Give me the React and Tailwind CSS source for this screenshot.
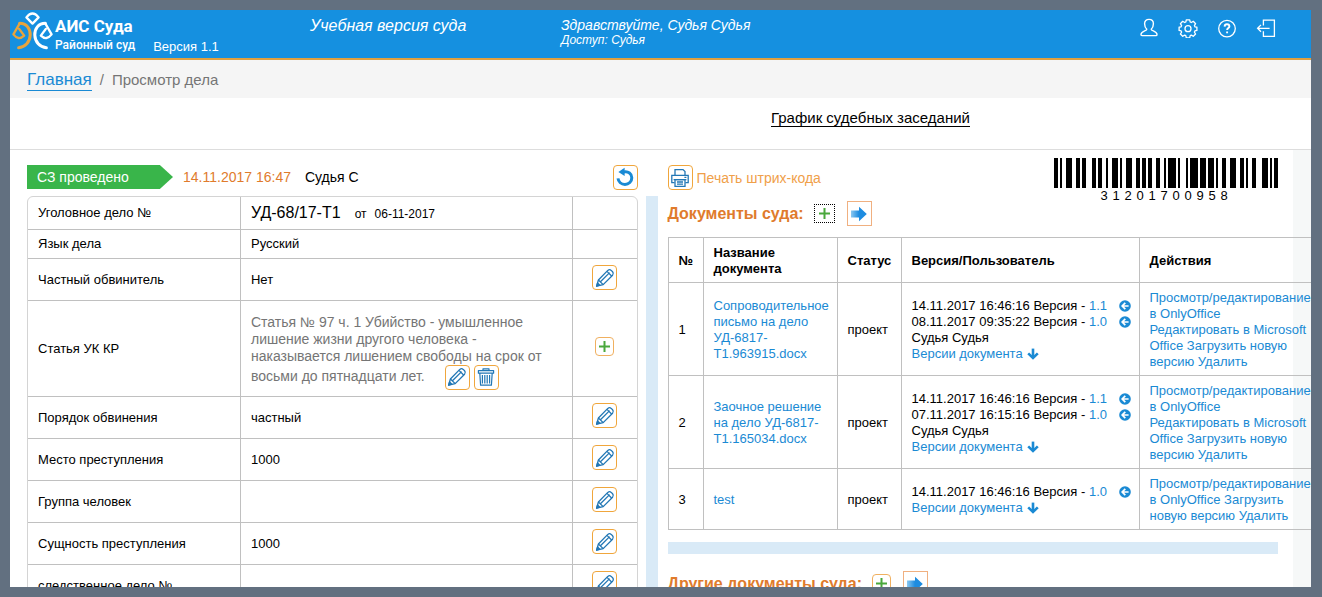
const caseRows = [
  { label: 'Частный обвинитель', value: 'Нет' },
  { label: 'Статья УК КР', article: true },
  { label: 'Порядок обвинения', value: 'частный' },
  { label: 'Место преступления', value: '1000' },
  { label: 'Группа человек', value: '' },
  { label: 'Сущность преступления', value: '1000' },
  { label: 'следственное дело №', value: '' },
];

const documents = [
  {
    id: 1,
    name: 'Сопроводительное письмо на дело УД-6817-Т1.963915.docx',
    status: 'проект',
    versions: [
      { date: '14.11.2017 16:46:16', number: '1.1' },
      { date: '08.11.2017 09:35:22', number: '1.0' },
    ],
    user: 'Судья Судья',
    actions: ['Редактировать в Microsoft Office', 'Загрузить новую версию', 'Удалить'],
  },
  {
    id: 2,
    name: 'Заочное решение на дело УД-6817-Т1.165034.docx',
    status: 'проект',
    versions: [
      { date: '14.11.2017 16:46:16', number: '1.1' },
      { date: '07.11.2017 16:15:16', number: '1.0' },
    ],
    user: 'Судья Судья',
    actions: ['Редактировать в Microsoft Office', 'Загрузить новую версию', 'Удалить'],
  },
  {
    id: 3,
    name: 'test',
    status: 'проект',
    versions: [{ date: '14.11.2017 16:46:16', number: '1.0' }],
    user: '',
    actions: ['Загрузить новую версию', 'Удалить'],
  },
];

// Code 128 symbols: bar and space widths in modules, bars first
const barcodeSymbols = [
  '211232', '212321', '221231', '123221', '212222',
  '114113', '114131', '311222', '322112', '2331112',
];

function Barcode({ number }) {
  let x = 0;
  const bars = [];
  [...barcodeSymbols.join('')].forEach((w, i) => {
    if (i % 2 === 0) bars.push({ x, w: Number(w) });
    x += Number(w);
  });

  return (
    <div className="w-56">
      <svg className="block h-[30px] w-full" viewBox="0 0 112 30" preserveAspectRatio="none" shapeRendering="crispEdges">
        {bars.map((bar) => (
          <rect key={bar.x} x={bar.x} y="0" width={bar.w} height="30" />
        ))}
      </svg>
      <div className="flex pt-px pl-11 text-[13px] leading-[14px]">
        {[...number].map((digit, i) => (
          <span key={i} className="w-3 text-center">{digit}</span>
        ))}
      </div>
    </div>
  );
}

function Logo() {
  return (
    <svg className="h-[38px] w-[41px]" viewBox="0 0 41 38" fill="none" strokeWidth="2.3" strokeLinejoin="round" strokeLinecap="round">
      <g stroke="#fff">
        <path d="M20.5 11.6 14.4 5.4Q20.5-2.4 26.6 5.4Z" />
        <path d="M33.4 11.6 39.6 22.4Q34.6 29 28.8 23.6L33.8 17" />
        <path d="M33.4 11.2C26.2 11.2 22.6 17 22.8 23C23 30 27.8 35.2 34.4 35.8" strokeWidth="3" />
      </g>
      <g stroke="#e8a43c">
        <path d="M7.6 11.6 1.4 22.4Q6.4 29 12.2 23.6L7.2 17" />
        <path d="M7.6 11.2C14.8 11.2 18.4 17 18.2 23C18 30 13.2 35.2 6.6 35.8" strokeWidth="3" />
      </g>
    </svg>
  );
}

function UserIcon() {
  return (
    <svg className="size-5" viewBox="0 0 20 20" fill="none" stroke="currentColor" strokeWidth="1.4">
      <path d="M7.8 11.2C6.2 9.8 5.6 8 5.6 5.8C5.6 3 7.3 1.4 10 1.4S14.4 3 14.4 5.8C14.4 8 13.8 9.8 12.2 11.2C12.2 13 18 12.8 18 16.4C18 17.3 17.6 17.6 17 17.6H3C2.4 17.6 2 17.3 2 16.4C2 12.8 7.8 13 7.8 11.2Z" />
    </svg>
  );
}

function GearIcon() {
  return (
    <svg className="size-5" viewBox="0 0 20 20" fill="none" stroke="currentColor" strokeWidth="1.3" strokeLinejoin="round">
      <path d="M8.3 1.8h3.4l.5 2.2 1.1.5 2-1.2 2.3 2.4-1.2 1.9.5 1.2 2 .4v3.2l-2 .5-.5 1.2 1.2 1.9-2.3 2.3-2-1.2-1.1.5-.5 2.2H8.3l-.5-2.2-1.1-.5-2 1.2-2.3-2.3 1.2-1.9-.5-1.2-2-.5V9.2l2-.4.5-1.2-1.2-1.9 2.3-2.4 2 1.2 1.1-.5z" />
      <circle cx="10" cy="10.7" r="3" />
    </svg>
  );
}

function HelpIcon() {
  return (
    <svg className="size-5" viewBox="0 0 20 20" fill="none" stroke="currentColor" strokeWidth="1.3">
      <circle cx="10" cy="10.6" r="8.3" />
      <path d="M7.6 8.6C7.7 7 8.6 6.3 10 6.3S12.4 7.1 12.4 8.4C12.4 10 10.1 10 10.1 12M10.1 13.4v1.9" strokeWidth="1.9" />
    </svg>
  );
}

function ExitIcon() {
  return (
    <svg className="size-5" viewBox="0 0 20 20" fill="none" stroke="currentColor" strokeWidth="1.3">
      <path d="M7.4 7.4V2.2H18.4V18.4H7.4V13.2M13.6 10.3H1.6M5 6.9 1.6 10.3 5 13.7" />
    </svg>
  );
}

function PencilIcon() {
  return (
    <svg className="size-5" viewBox="0 0 20 20" fill="none" stroke="#2277b5" strokeWidth="1.3" strokeLinejoin="round">
      <path d="M1.6 18.2 3.4 12 12.8 2.4Q14.6 1 16.2 2.4L17.6 3.8Q19 5.4 17.6 7.2L8.2 16.6Z" />
      <path d="M3.4 12 8.2 16.6M5.2 14 14.6 4.6M12 3.4 16.6 8" />
      <path d="M1.6 18.2 2.6 15 4.8 17.2Z" fill="#2277b5" />
    </svg>
  );
}

function TrashIcon() {
  return (
    <svg className="size-5" viewBox="0 0 20 20" fill="none" stroke="#2277b5" strokeWidth="1.2" strokeLinejoin="round">
      <path d="M7 3.6V1.8H13V3.6M2.4 3.6H17.6V6.2H2.4ZM3.8 6.2 4.6 18.2H15.4L16.2 6.2" />
      <path d="M6.4 8V16.6M8.8 8V16.6M11.2 8V16.6M13.6 8V16.6" />
    </svg>
  );
}

function PrinterIcon() {
  return (
    <svg className="size-5" viewBox="0 0 20 20" fill="none" stroke="#2277b5" strokeWidth="1.3">
      <path d="M5 7.4V1.6H13L15 3.6V7.4M4.6 14.6H1.8V7.4H18.2V14.6H15.4M3.6 11.6H16.4" />
      <path d="M5 11.6H15V18.4H5ZM7 14H13M7 16.2H13M14.4 9.4H16.4" />
    </svg>
  );
}

function RefreshIcon() {
  return (
    <svg className="size-5" viewBox="0 0 20 20" fill="none">
      <path d="M8.6 5C13.4 4 16.8 6.8 16.8 10.8C16.8 14.6 13.8 17.4 10 17.4C6.2 17.4 3.4 14.8 3 11.4" stroke="#1a8ad4" strokeWidth="3" />
      <path d="M3.4 5 9.6.8V9Z" fill="#1a8ad4" />
    </svg>
  );
}

function PlusIcon() {
  return (
    <svg className="size-[13px]" viewBox="0 0 13 13" stroke="#4aa83c" strokeWidth="2">
      <path d="M6.5 1V12M1 6.5H12" />
    </svg>
  );
}

function ArrowIcon() {
  return (
    <svg className="size-4" viewBox="0 0 16 16">
      <defs>
        <linearGradient id="arrowFill">
          <stop offset="0" stopColor="#8cc8f0" />
          <stop offset="0.5" stopColor="#1e8ce0" />
        </linearGradient>
      </defs>
      <path d="M0 4.6H8V.8L15.8 8 8 15.2V11.4H0Z" fill="url(#arrowFill)" />
    </svg>
  );
}

function RestoreIcon() {
  return (
    <svg className="size-3" viewBox="0 0 12 12" fill="none">
      <circle cx="6" cy="6" r="5.8" fill="#1a8ad4" />
      <path d="M9.6 6H3.4M6.3 2.9 3.2 6 6.3 9.1" stroke="#fff" strokeWidth="1.7" />
    </svg>
  );
}

function DownIcon() {
  return (
    <svg className="size-3" viewBox="0 0 12 12" fill="none" stroke="#1a8ad4">
      <path d="M6 .6V9.6" strokeWidth="2.6" />
      <path d="M1.2 5.4 6 10 10.8 5.4" strokeWidth="2.6" />
    </svg>
  );
}

function IconButton({ label, children }) {
  return (
    <button
      type="button"
      aria-label={label}
      className="inline-flex size-[25px] shrink-0 items-center justify-center rounded border border-[#f0a63c] bg-white"
    >
      {children}
    </button>
  );
}

function AddButton({ focused }) {
  return (
    <button
      type="button"
      aria-label="Добавить"
      className={
        focused
          ? 'flex h-[19px] w-[21px] items-center justify-center border border-dotted border-black bg-white'
          : 'inline-flex size-[19px] items-center justify-center rounded-sm border border-[#f0b060] bg-white'
      }
    >
      <PlusIcon />
    </button>
  );
}

function DocumentsTitle({ title, focused }) {
  return (
    <div className="flex items-center">
      <h2 className="text-base font-bold text-[#e07b2c]">{title}</h2>
      <div className="ml-2.5 flex items-center gap-3">
        <AddButton focused={focused} />
        <button
          type="button"
          aria-label="Перейти"
          className="flex size-[25px] items-center justify-center border border-[#f0b080] bg-white"
        >
          <ArrowIcon />
        </button>
      </div>
    </div>
  );
}

function Header() {
  return (
    <header className="flex h-[50px] shrink-0 border-b-2 border-[#e0a040] bg-[#1590e0] text-white">
      <div className="flex w-[300px] shrink-0 pt-0.5 pl-0.5">
        <Logo />
        <div className="ml-0.5 pt-1 font-['Roboto']">
          <div className="text-[17px] leading-5 font-bold">АИС Суда</div>
          <div className="text-xs leading-[18px] font-medium">Районный суд</div>
        </div>
        <span className="ml-[18px] self-end pb-[3px] text-[13px] leading-4">Версия 1.1</span>
      </div>
      <div className="w-[251px] shrink-0 pt-1.5 text-base leading-5 italic">Учебная версия суда</div>
      <div className="flex-1 pt-1.5 italic">
        <div className="text-sm leading-[18px]">Здравствуйте, Судья Судья</div>
        <div className="text-xs leading-3">Доступ: Судья</div>
      </div>
      <nav className="flex items-start gap-[19px] pt-2 pr-[35px]">
        <button type="button" aria-label="Профиль"><UserIcon /></button>
        <button type="button" aria-label="Настройки"><GearIcon /></button>
        <button type="button" aria-label="Помощь"><HelpIcon /></button>
        <button type="button" aria-label="Выход"><ExitIcon /></button>
      </nav>
    </header>
  );
}

function CasePanel() {
  return (
    <section>
      <div className="flex h-[46px] items-center pt-2">
        <div className="h-6 w-[146px] bg-[#39b54a] pl-2.5 text-sm leading-6 text-white [clip-path:polygon(0_0,91%_0,100%_50%,91%_100%,0_100%)]">
          СЗ проведено
        </div>
        <span className="ml-2.5 text-sm text-[#e07b2c]">14.11.2017 16:47</span>
        <span className="ml-3.5 text-sm">Судья С</span>
        <div className="ml-auto flex"><IconButton label="Обновить"><RefreshIcon /></IconButton></div>
      </div>

      <div className="overflow-hidden rounded-md border border-[#d4d4d4]">
        <table className="w-full table-fixed border-separate border-spacing-0 text-[13px] [&_td]:border-b [&_td]:border-[#c0c0c0] [&_td]:px-2.5 [&_th]:border-r [&_th]:border-b [&_th]:border-[#c0c0c0] [&_th]:px-2.5 [&_th]:text-left [&_th]:font-normal">
          <colgroup>
            <col className="w-[35%]" />
            <col />
            <col className="w-16" />
          </colgroup>
          <tbody>
            <tr>
              <th scope="row" className="h-[33px]">Уголовное дело №</th>
              <td className="border-r">
                <span className="text-base leading-5">УД-68/17-Т1</span>
                <span className="ml-3.5 text-xs">от</span>
                <span className="ml-2 text-xs">06-11-2017</span>
              </td>
              <td></td>
            </tr>
            <tr>
              <th scope="row" className="h-[29px]">Язык дела</th>
              <td className="border-r">Русский</td>
              <td></td>
            </tr>
            {caseRows.map((row) => (
              <tr key={row.label}>
                <th scope="row" className={row.article ? 'h-24' : 'h-[42px]'}>{row.label}</th>
                <td className="border-r">
                  {row.article ? (
                    <div className="pt-1.5 text-sm leading-[17px] text-[#757575]">
                      Статья № 97 ч. 1 Убийство - умышленное лишение жизни другого человека - наказывается лишением
                      свободы на срок от восьми до пятнадцати лет.
                      <span className="ml-5 inline-flex gap-1 align-middle">
                        <IconButton label="Изменить статью"><PencilIcon /></IconButton>
                        <IconButton label="Удалить статью"><TrashIcon /></IconButton>
                      </span>
                    </div>
                  ) : (
                    row.value
                  )}
                </td>
                <td>
                  <div className="flex justify-center pb-1">
                    {row.article ? <AddButton /> : <IconButton label="Изменить"><PencilIcon /></IconButton>}
                  </div>
                </td>
              </tr>
            ))}
          </tbody>
        </table>
      </div>
    </section>
  );
}

function DocumentsTable() {
  return (
    <table className="w-[654px] table-fixed border-collapse text-[13px] leading-4 [&_td]:border [&_td]:border-[#c0c0c0] [&_td]:pt-[7px] [&_td]:pr-2 [&_td]:pb-[5px] [&_td]:pl-2.5 [&_th]:border [&_th]:border-[#c0c0c0] [&_th]:pt-[7px] [&_th]:pr-2 [&_th]:pb-[5px] [&_th]:pl-2.5 [&_th]:text-left [&_th]:font-bold">
      <colgroup>
        <col className="w-[35px]" />
        <col className="w-[134px]" />
        <col className="w-16" />
        <col className="w-[238px]" />
        <col />
      </colgroup>
      <thead>
        <tr>
          <th>№</th>
          <th>Название документа</th>
          <th>Статус</th>
          <th>Версия/Пользователь</th>
          <th>Действия</th>
        </tr>
      </thead>
      <tbody>
        {documents.map((doc) => (
          <tr key={doc.id}>
            <td>{doc.id}</td>
            <td><a href="#" className="text-[#1a8ad4]">{doc.name}</a></td>
            <td>{doc.status}</td>
            <td>
              {doc.versions.map((version) => (
                <div key={version.number} className="flex items-center">
                  <span className="whitespace-pre">{version.date} Версия - </span>
                  <a href="#" className="text-[#1a8ad4]">{version.number}</a>
                  <a href="#" aria-label="Вернуть версию" className="ml-auto"><RestoreIcon /></a>
                </div>
              ))}
              {doc.user && <div>{doc.user}</div>}
              <a href="#" className="flex items-center gap-1 text-[#1a8ad4]">
                Версии документа <DownIcon />
              </a>
            </td>
            <td>
              <a href="#" className="text-[#1a8ad4]">
                <span className="whitespace-nowrap">Просмотр/редактирование</span> в OnlyOffice
              </a>{' '}
              {doc.actions.map((action) => (
                <span key={action}>
                  <a href="#" className="text-[#1a8ad4]">{action}</a>{' '}
                </span>
              ))}
            </td>
          </tr>
        ))}
      </tbody>
    </table>
  );
}

function DocumentsPanel() {
  return (
    <section className="min-w-0">
      <div className="flex h-[51px] items-start justify-between">
        <button type="button" className="mt-[15px] flex items-center gap-1 text-sm text-[#f0a04a]">
          <span className="flex size-[25px] items-center justify-center rounded border border-[#f0a63c]">
            <PrinterIcon />
          </span>
          Печать штрих-кода
        </button>
        <div className="pt-2"><Barcode number="31201700958" /></div>
      </div>
      <DocumentsTitle title="Документы суда:" focused />
      <div className="mt-[11px]"><DocumentsTable /></div>
      <div className="mt-3 mb-[17px] h-3 bg-[#d9eaf7]"></div>
      <DocumentsTitle title="Другие документы суда:" />
    </section>
  );
}

function App() {
  return (
    <div className="h-screen bg-[#627080] py-2.5 pr-[11px] pl-2.5 font-['Liberation_Sans',Arial,sans-serif] text-black">
      <div className="flex h-full flex-col overflow-hidden bg-white">
        <Header />
        <nav className="flex h-[38px] shrink-0 items-center bg-[#f5f5f5] px-[17px] pt-0.5 text-[15px] text-[#757575]">
          <a href="#" className="border-b border-[#1a8ad4] text-[17px] leading-5 text-[#1a8ad4]">Главная</a>
          <span className="mx-2">/</span>
          <span>Просмотр дела</span>
        </nav>
        <div className="flex h-[52px] shrink-0 justify-end border-b border-[#ddd] pt-3 pr-[341px]">
          <a href="#" className="self-start border-b border-black text-[15px] leading-4">График судебных заседаний</a>
        </div>
        <div className="min-h-0 flex-1 bg-[#f6f8f8] pr-[18px]">
          <main className="grid h-full grid-cols-[minmax(0,1fr)_30px_minmax(0,1fr)] bg-white pr-[15px] pl-[17px]">
            <CasePanel />
            <div className="mt-[46px] mr-2.5 ml-2 bg-[#d9eaf7]"></div>
            <DocumentsPanel />
          </main>
        </div>
      </div>
    </div>
  );
}

export default App;
